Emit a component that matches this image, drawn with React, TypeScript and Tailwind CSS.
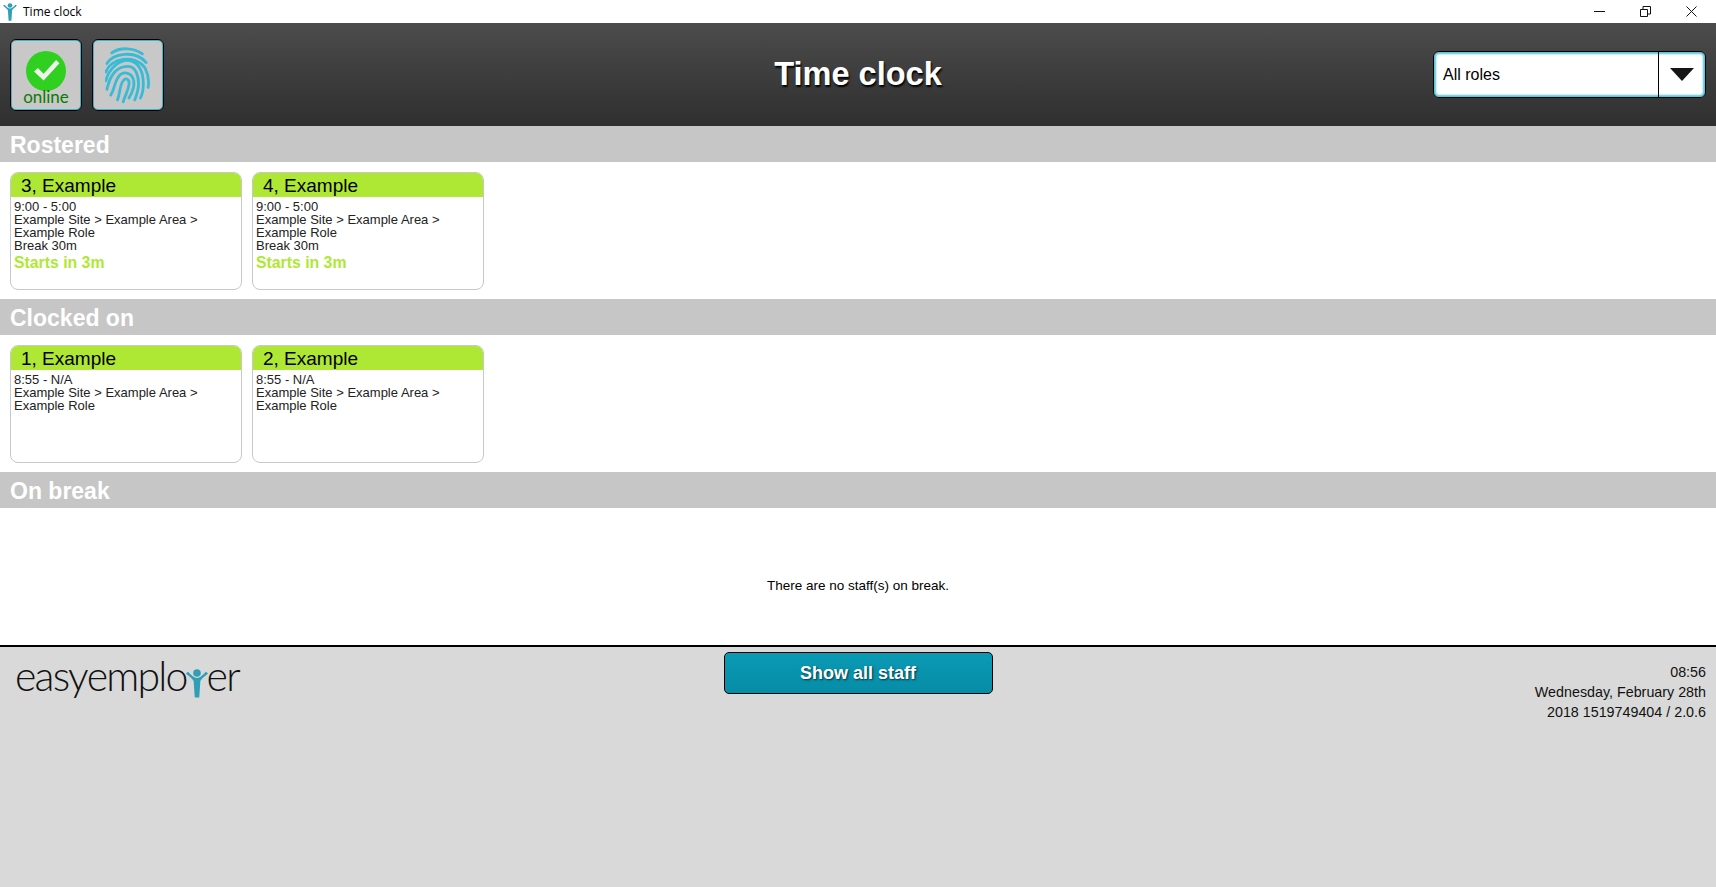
const SANS = "font-['Liberation_Sans',Arial,sans-serif]";

type Shift = { name: string; time: string; site: string; role: string; breakText?: string; status?: string };

const rostered: Shift[] = [
  { name: "3, Example", time: "9:00 - 5:00", site: "Example Site > Example Area >", role: "Example Role", breakText: "Break 30m", status: "Starts in 3m" },
  { name: "4, Example", time: "9:00 - 5:00", site: "Example Site > Example Area >", role: "Example Role", breakText: "Break 30m", status: "Starts in 3m" },
];

const clockedOn: Shift[] = [
  { name: "1, Example", time: "8:55 - N/A", site: "Example Site > Example Area >", role: "Example Role" },
  { name: "2, Example", time: "8:55 - N/A", site: "Example Site > Example Area >", role: "Example Role" },
];

// The little person from the logo, used in the title bar and the wordmark
function Person({ className }: { className: string }) {
  return (
    <svg viewBox="0 0 20 26" className={className}>
      <circle cx="10" cy="3.6" r="3.4" fill="#2f9fb5" />
      <path d="M0 4 C4 7.5 6.5 9 7 11 L8 25.5 L12 25.5 L13 11 C13.5 9 16 7.5 20 4 L18 2.5 C15 6 12.5 8 10 8 C7.5 8 5 6 2 2.5 Z" fill="#2f9fb5" />
    </svg>
  );
}

function TitleBar() {
  return (
    <div className="flex h-[23px] items-center justify-between bg-white">
      <div className="flex items-center">
        <Person className="ml-[2px] h-[18px] w-[16px]" />
        <span className="ml-[5px] font-['Open_Sans',sans-serif] text-[12px] text-black">Time clock</span>
      </div>
      <div className="mr-[19px] flex items-center gap-[35px]">
        <svg width="11" height="11" viewBox="0 0 11 11" fill="none" stroke="#111" strokeWidth="1">
          <path d="M0 5.5H11" />
        </svg>
        <svg width="11" height="11" viewBox="0 0 11 11" fill="none" stroke="#111" strokeWidth="1">
          <path d="M0.5 3.5H7.5V10.5H0.5Z M3 3V0.5H10.5V8H8" />
        </svg>
        <svg width="11" height="11" viewBox="0 0 11 11" fill="none" stroke="#111" strokeWidth="1">
          <path d="M0.5 0.5L10.5 10.5M10.5 0.5L0.5 10.5" />
        </svg>
      </div>
    </div>
  );
}

function Fingerprint() {
  return (
    <svg viewBox="0 0 48 58" className="mt-[6px] h-[58px] w-[46px]" fill="none" stroke="#37bbd6" strokeWidth="2.9" strokeLinecap="round">
      <path d="M7 6C15 0 30 0 39 7" />
      <path d="M2 17C8 7 31 2 43 16" />
      <path d="M1 26C5 12 31 6 42 22C45 28 46 36 45 42" />
      <path d="M1 35C4 22 16 12 26 14C36 16 40 27 40 38C40 44 39 49 37 53" />
      <path d="M2 44C5 30 12 20 24 20C33 20 35 32 35 38C35 44 33 50 31 55" />
      <path d="M6 50C10 44 10 36 14 31C18 25 28 25 30 35C31 41 28 48 25 53" />
      <path d="M13 55C16 48 15 40 19 35C22 31 26 34 25 39C24 46 21 50 19 57" />
    </svg>
  );
}

function IconButton({ children }: { children: React.ReactNode }) {
  return (
    <div className="flex h-[72px] w-[72px] flex-col items-center rounded-[6px] border border-black bg-[#c8c8c8] shadow-[inset_0_0_0_1px_#3fb4cc]">
      {children}
    </div>
  );
}

function Header() {
  return (
    <header className="grid h-[103px] grid-cols-[1fr_auto_1fr] items-center bg-gradient-to-b from-[#4c4c4c] to-[#2f2f2f] pl-[10px] pr-[10px]">
      <div className="flex gap-[10px]">
        <IconButton>
          <div className="mt-[11px] flex h-[40px] w-[40px] items-center justify-center rounded-full bg-[#2fd020]">
            <svg viewBox="0 0 28 24" className="h-[23px] w-[27px]">
              <path d="M1 13L5 9.5L11 15.5L24 1L27.5 4.5L11 22.5Z" fill="#eef5ec" />
            </svg>
          </div>
          <span className="mt-[-2px] font-['Lato',sans-serif] text-[17px] font-normal leading-[16px] text-[#0a7a00]">online</span>
        </IconButton>
        <IconButton>
          <Fingerprint />
        </IconButton>
      </div>
      <h1 className={`${SANS} text-[32.5px] font-bold text-white [text-shadow:1px_2px_2px_#000]`}>Time clock</h1>
      <div className={`${SANS} flex h-[47px] w-[273px] justify-self-end overflow-hidden rounded-[6px] border border-black bg-white shadow-[inset_0_0_2px_2px_#57c3d6]`}>
        <div className="flex flex-1 items-center pl-[9px] text-[16px] text-black">All roles</div>
        <div className="flex w-[47px] items-center justify-center border-l border-black pb-[1px]">
          <svg width="24" height="13" viewBox="0 0 24 13">
            <path d="M0 0H24L12 13Z" fill="#151515" />
          </svg>
        </div>
      </div>
    </header>
  );
}

function SectionBar({ title }: { title: string }) {
  return (
    <div className={`${SANS} flex h-[36px] items-center bg-[#c6c6c6] pl-[10px] pt-[3px] text-[23px] font-bold text-white`}>
      {title}
    </div>
  );
}

function ShiftCard({ shift }: { shift: Shift }) {
  return (
    <div className={`${SANS} h-[118px] w-[232px] overflow-hidden rounded-[8px] border border-[#c8c8c8] bg-white`}>
      <div className="flex h-[24px] items-center bg-[#aee834] pl-[10px] pt-[2px] text-[19px] text-black">{shift.name}</div>
      <div className="pl-[3px] pt-[3px] text-[13px] leading-[13px] text-[#222]">
        <div>{shift.time}</div>
        <div>{shift.site}</div>
        <div>{shift.role}</div>
        {shift.breakText && <div>{shift.breakText}</div>}
        {shift.status && (
          <div className="mt-[2px] text-[15.8px] font-bold leading-[18px] text-[#aee834]">{shift.status}</div>
        )}
      </div>
    </div>
  );
}

function ShiftRow({ shifts }: { shifts: Shift[] }) {
  return (
    <div className="flex h-[137px] gap-[10px] bg-white pl-[10px] pt-[10px]">
      {shifts.map((s) => (
        <ShiftCard key={s.name} shift={s} />
      ))}
    </div>
  );
}

function Logo() {
  return (
    <div className="ml-[15px] mt-[7px] flex items-baseline font-['Lato',sans-serif] text-[41px] leading-[44px] tracking-[-1.8px] text-[#111]">
      <span className="font-light">easy</span>
      <span className="font-light">emplo</span>
      <Person className="mx-[-2px] h-[29px] w-[24px] translate-y-[7px]" />
      <span className="font-light">er</span>
    </div>
  );
}

function Footer() {
  return (
    <footer className="grid flex-1 grid-cols-[1fr_auto_1fr] items-start border-t-2 border-black bg-[#d9d9d9]">
      <Logo />
      <button className={`${SANS} mt-[5px] h-[42px] w-[269px] rounded-[5px] border border-black bg-gradient-to-b from-[#0a9ab4] to-[#078ca6] text-[18px] font-bold text-white [text-shadow:1px_1px_2px_#00313d]`}>
        Show all staff
      </button>
      <div className={`${SANS} pr-[10px] pt-[15px] text-right text-[14.3px] leading-[20px] text-[#111]`}>
        <div>08:56</div>
        <div>Wednesday, February 28th</div>
        <div>2018 1519749404 / 2.0.6</div>
      </div>
    </footer>
  );
}

export default function App() {
  return (
    <div className="flex h-[887px] w-[1716px] flex-col overflow-hidden bg-white">
      <TitleBar />
      <Header />
      <SectionBar title="Rostered" />
      <ShiftRow shifts={rostered} />
      <SectionBar title="Clocked on" />
      <ShiftRow shifts={clockedOn} />
      <SectionBar title="On break" />
      <div className={`${SANS} flex h-[137px] items-center justify-center bg-white pt-[19px] text-[13.5px] text-black`}>
        There are no staff(s) on break.
      </div>
      <Footer />
    </div>
  );
}
